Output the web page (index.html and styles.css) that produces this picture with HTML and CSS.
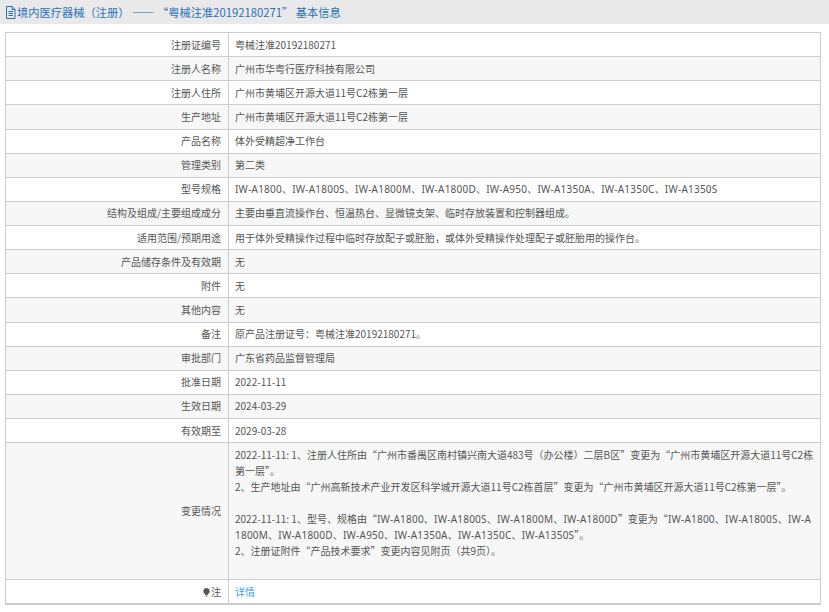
FILE: index.html
```html
<!DOCTYPE html>
<html lang="zh-CN">
<head>
    <meta charset="UTF-8">
    <title>基本信息</title>
    <link rel="stylesheet" href="styles.css">
</head>
<body>
    <div class="page-title">
        <svg class="doc-icon" viewBox="0 0 11 13" width="11" height="13">
            <path d="M1.5 .5H7L10 3.5V12.5H1.5Z M7 .5V3.5H10 M3.5 5.5H8 M3.5 7.5H8 M3.5 9.5H8" fill="none" stroke="#2a6fb5" stroke-width="1"/>
        </svg>
        <span>境内医疗器械（注册） —— “粤械注准20192180271” 基本信息</span>
    </div>
    <table class="info-table">
        <tr><th>注册证编号</th><td>粤械注准20192180271</td></tr>
        <tr><th>注册人名称</th><td>广州市华粤行医疗科技有限公司</td></tr>
        <tr><th>注册人住所</th><td>广州市黄埔区开源大道11号C2栋第一层</td></tr>
        <tr><th>生产地址</th><td>广州市黄埔区开源大道11号C2栋第一层</td></tr>
        <tr><th>产品名称</th><td>体外受精超净工作台</td></tr>
        <tr><th>管理类别</th><td>第二类</td></tr>
        <tr><th>型号规格</th><td><span class="model">IW-A1800、IW-A1800S、IW-A1800M、IW-A1800D、IW-A950、IW-A1350A、IW-A1350C、IW-A1350S</span></td></tr>
        <tr><th>结构及组成/主要组成成分</th><td>主要由垂直流操作台、恒温热台、显微镜支架、临时存放装置和控制器组成。</td></tr>
        <tr><th>适用范围/预期用途</th><td>用于体外受精操作过程中临时存放配子或胚胎，或体外受精操作处理配子或胚胎用的操作台。</td></tr>
        <tr><th>产品储存条件及有效期</th><td>无</td></tr>
        <tr><th>附件</th><td>无</td></tr>
        <tr><th>其他内容</th><td>无</td></tr>
        <tr><th>备注</th><td>原产品注册证号：粤械注准20192180271。</td></tr>
        <tr><th>审批部门</th><td>广东省药品监督管理局</td></tr>
        <tr><th>批准日期</th><td>2022-11-11</td></tr>
        <tr><th>生效日期</th><td>2024-03-29</td></tr>
        <tr><th>有效期至</th><td>2029-03-28</td></tr>
        <tr class="change-row">
            <th>变更情况</th>
            <td>2022-11-11: 1、注册人住所由“广州市番禺区南村镇兴南大道483号（办公楼）二层B区”变更为“广州市黄埔区开源大道11号C2栋第一层”。<br>2、生产地址由“广州高新技术产业开发区科学城开源大道11号C2栋首层”变更为“广州市黄埔区开源大道11号C2栋第一层”。<br><br>2022-11-11: 1、型号、规格由“<span class="model">IW-A1800、IW-A1800S、IW-A1800M、IW-A1800D</span>”变更为“<span class="model">IW-A1800、IW-A1800S、IW-A</span><br><span class="model">1800M、IW-A1800D、IW-A950、IW-A1350A、IW-A1350C、IW-A1350S</span>”。<br>2、注册证附件“产品技术要求”变更内容见附页（共9页）。<br><br></td>
        </tr>
        <tr>
            <th>
                <svg class="bulb-icon" viewBox="0 0 7 9" width="7" height="9">
                    <path d="M3.5 0A3.2 3.2 0 0 1 5 6L4.6 7H2.4L2 6A3.2 3.2 0 0 1 3.5 0Z M2.6 7.6H4.4V8.2L3.5 9L2.6 8.2Z" fill="#555"/>
                </svg>注
            </th>
            <td><a class="detail-link" href="#">详情</a></td>
        </tr>
    </table>
</body>
</html>
```

FILE: styles.css
```css
body {
    margin: 0;
    font-family: "Noto Sans CJK SC", "Noto Sans", sans-serif;
    font-size: 10px;
    color: #555;
    background: #fff;
}

.page-title {
    display: flex;
    align-items: center;
    gap: 1px;
    height: 24px;
    padding-left: 5px;
    background: #e9e9e9;
    color: #2a6fb5;
    font-size: 11.25px;
}

.doc-icon {
    flex: none;
}

.info-table {
    width: 816px;
    margin: 8px 0 0 5px;
    border-collapse: collapse;
    table-layout: fixed;
    border: 1px solid #ccc;
    border-bottom-width: 2px;
}

.info-table th,
.info-table td {
    padding: 3.57px 6px;
    border: 1px solid #ccc;
    line-height: 16px;
    font-weight: normal;
}

.info-table th {
    width: 209px;
    padding-right: 7px;
    text-align: right;
}

.info-table td {
    text-align: left;
    word-break: break-all;
}

.info-table tr:nth-child(even) {
    background: #f7f7f7;
}

.info-table .change-row td {
    padding-top: 4px;
    padding-bottom: 4px;
}

.model {
    font-family: "Noto Sans", "Noto Sans CJK SC", sans-serif;
    letter-spacing: 0.22px;
}

.bulb-icon {
    margin-right: 1px;
    vertical-align: -1px;
}

.detail-link {
    color: #3c9cff;
    text-decoration: none;
}
```
